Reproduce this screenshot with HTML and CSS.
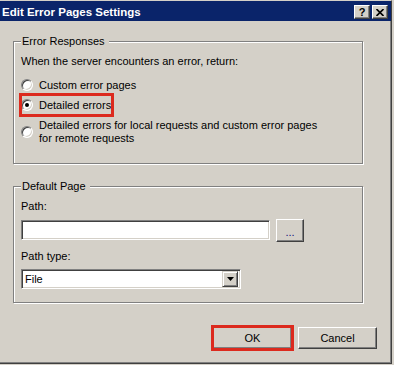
FILE: index.html
```html
<!DOCTYPE html>
<html lang="en">
<head>
    <meta charset="UTF-8">
    <title>Edit Error Pages Settings</title>
    <link rel="stylesheet" href="styles.css">
</head>
<body>
  <div class="window">
    <!-- Title bar -->
    <header class="titlebar">
      <span class="title">Edit Error Pages Settings</span>
      <div class="caption-btns">
        <span class="cap-btn help">?</span>
        <span class="cap-btn close">
          <svg width="8" height="7" viewBox="0 0 8 7"><path d="M0.5 0 L7.5 7 M7.5 0 L0.5 7" stroke="#000" stroke-width="1.6"/></svg>
        </span>
      </div>
    </header>

    <main class="content">
      <fieldset class="group group-responses">
        <legend>Error Responses</legend>
        <p class="prompt">When the server encounters an error, return:</p>
        <label class="option">
          <span class="radio"></span>
          <span>Custom error pages</span>
        </label>
        <label class="option marked">
          <span class="radio checked"></span>
          <span>Detailed errors</span>
        </label>
        <label class="option multi">
          <span class="radio"></span>
          <span>Detailed errors for local requests and custom error pages<br>for remote requests</span>
        </label>
      </fieldset>

      <fieldset class="group group-default">
        <legend>Default Page</legend>
        <div class="field-label">Path:</div>
        <div class="path-row">
          <div class="textbox"></div>
          <span class="btn browse">...</span>
        </div>
        <div class="field-label type-label">Path type:</div>
        <div class="combo">
          <span class="combo-value">File</span>
          <span class="combo-arrow"><svg width="7" height="4" viewBox="0 0 7 4"><path d="M0 0 H7 L3.5 4 Z" fill="#000"/></svg></span>
        </div>
      </fieldset>

      <div class="actions">
        <span class="btn action marked">OK</span>
        <span class="btn action">Cancel</span>
      </div>
    </main>
  </div>
</body>
</html>
```

FILE: styles.css
```css
:root {
  --clr-face: #d4d0c8;
  --clr-shadow: #808080;
  --clr-dark: #404040;
  --clr-title: #0a246a;
  --clr-mark: #dc2a1e;
}
* { margin: 0; padding: 0; box-sizing: border-box; }
body {
  background: var(--clr-face);
  font-family: "Liberation Sans", Arial, sans-serif;
  font-size: 11px;
  color: #000;
}
.window {
  width: 392px;
  height: 364px;
  background: var(--clr-face);
  border-top: 1px solid var(--clr-face);
  border-right: 1px solid var(--clr-dark);
  border-bottom: 1px solid var(--clr-dark);
  box-shadow: inset -1px -1px 0 var(--clr-shadow);
  display: flex;
  flex-direction: column;
}
.titlebar {
  height: 20px;
  background: var(--clr-title);
  display: flex;
  align-items: center;
  justify-content: space-between;
  padding: 0 3px 0 2px;
}
.title {
  color: #fff;
  font-weight: 700;
  font-size: 11.5px;
  padding-top: 1px;
}
.caption-btns {
  display: flex;
  gap: 2px;
  padding-top: 2px;
}
.cap-btn {
  width: 16px;
  height: 14px;
  background: var(--clr-face);
  border: 1px solid;
  border-color: #fff var(--clr-dark) var(--clr-dark) #fff;
  box-shadow: inset -1px -1px 0 var(--clr-shadow);
  display: flex;
  align-items: center;
  justify-content: center;
  font-weight: 700;
  font-size: 11px;
  line-height: 1;
}
.content {
  flex: 1;
  display: flex;
  flex-direction: column;
}
.group {
  width: 350px;
  margin-left: 13px;
  border: 1px solid var(--clr-shadow);
  box-shadow: inset 1px 1px 0 #fff, 1px 1px 0 #fff;
  padding: 7px 7px 18px 7px;
  min-width: 0;
}
.group legend {
  line-height: 13px;
  padding: 0 4px 0 1px;
  background: var(--clr-face);
}
.group-responses { margin-top: 14px; }
.group-default { margin-top: 16px; padding-bottom: 13px; }
.prompt {
  line-height: 13px;
  margin-bottom: 7px;
}
.option {
  display: flex;
  align-items: center;
  gap: 6px;
  width: fit-content;
  height: 20px;
  padding-right: 1px;
  line-height: 13px;
}
.option.multi {
  height: auto;
  margin-top: 4px;
}
.marked {
  outline: 3px solid var(--clr-mark);
  outline-offset: -1px;
}
.radio {
  flex: none;
  width: 12px;
  height: 12px;
  border-radius: 50%;
  background: #fff;
  border: 1px solid;
  border-color: var(--clr-shadow) #fff #fff var(--clr-shadow);
  box-shadow: inset 1px 1px 0 var(--clr-dark), inset -1px -1px 0 var(--clr-face);
  display: flex;
  align-items: center;
  justify-content: center;
}
.radio.checked::after {
  content: "";
  width: 4px;
  height: 4px;
  border-radius: 50%;
  background: #000;
}
.field-label {
  line-height: 13px;
  margin-bottom: 6px;
}
.type-label { margin-top: 8px; }
.path-row {
  display: flex;
  align-items: flex-start;
  gap: 6px;
}
.textbox, .combo {
  height: 20px;
  background: #fff;
  border: 1px solid;
  border-color: var(--clr-shadow) #fff #fff var(--clr-shadow);
  box-shadow: inset 1px 1px 0 var(--clr-dark), inset -1px -1px 0 var(--clr-face);
}
.textbox {
  width: 249px;
  margin-top: 1px;
}
.btn {
  background: var(--clr-face);
  border: 1px solid;
  border-color: #fff var(--clr-dark) var(--clr-dark) #fff;
  box-shadow: inset -1px -1px 0 var(--clr-shadow);
  display: flex;
  align-items: center;
  justify-content: center;
}
.browse {
  width: 28px;
  height: 23px;
  padding-top: 2px;
  color: #10107a;
}
.combo {
  width: 220px;
  display: flex;
  align-items: center;
  justify-content: space-between;
  padding: 2px;
}
.combo-value { padding-left: 1px; }
.combo-arrow {
  width: 16px;
  height: 16px;
  background: var(--clr-face);
  border: 1px solid;
  border-color: var(--clr-face) var(--clr-dark) var(--clr-dark) var(--clr-face);
  box-shadow: inset 1px 1px 0 #fff, inset -1px -1px 0 var(--clr-shadow);
  display: flex;
  align-items: center;
  justify-content: center;
}
.actions {
  display: flex;
  justify-content: flex-end;
  gap: 6px;
  margin-top: 24px;
  padding-right: 14px;
}
.action {
  width: 79px;
  height: 22px;
}
.action.marked { outline-offset: -1px; }
```
